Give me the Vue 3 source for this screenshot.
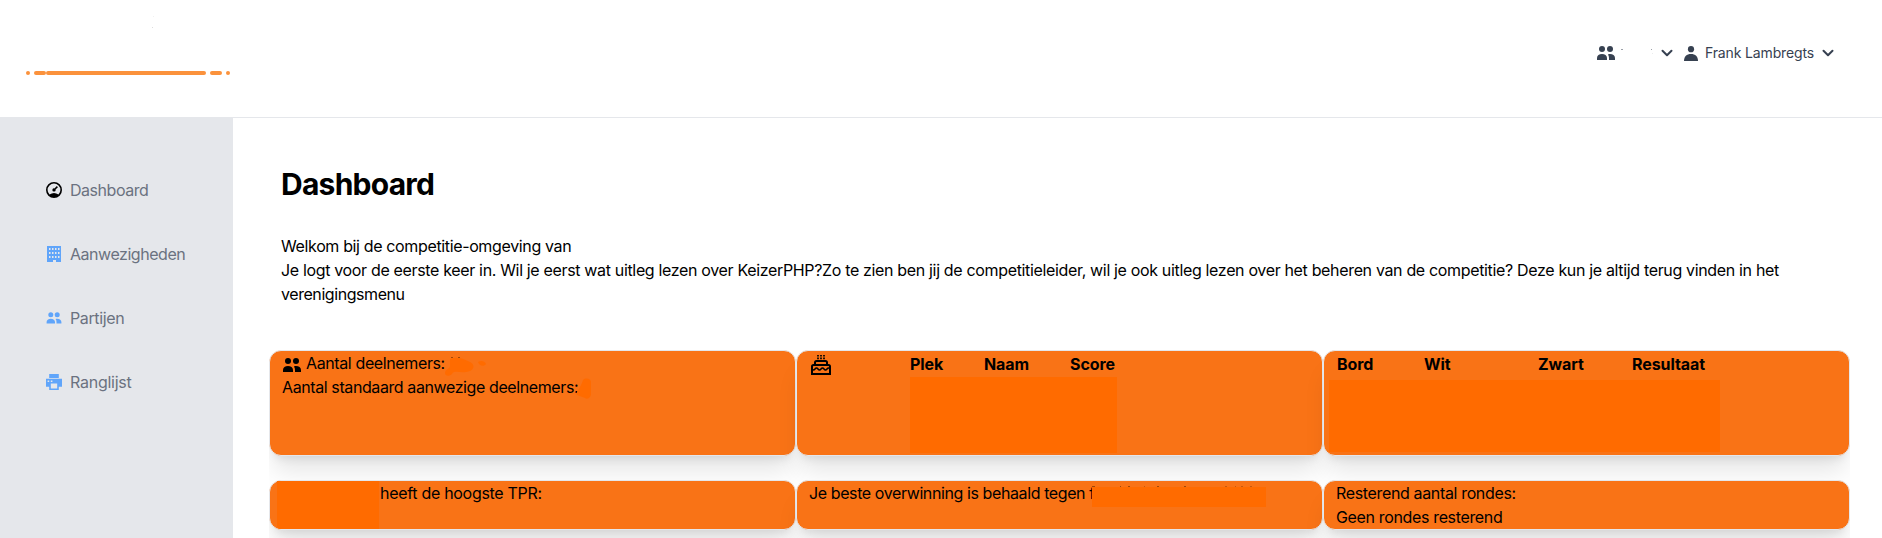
<script setup>
const standings = ['Plek', 'Naam', 'Score']
const games = ['Bord', 'Wit', 'Zwart', 'Resultaat']
</script>

<template>
  <div class="page">
    <header class="topbar">
      <svg class="logo" width="204" height="60" viewBox="0 0 204 60">
        <g fill="#ddd"><rect x="126" y="12" width="1" height="1" /><rect x="127" y="1" width="1" height="1" opacity=".4" /></g>
        <g fill="#fb923c">
          <rect y="56" width="4" height="4" rx="2" /><rect x="8" y="56" width="12" height="4" rx="2" />
          <rect x="20" y="56" width="160" height="4" rx="2" /><rect x="184" y="56" width="12" height="4" rx="2" />
          <rect x="200" y="56" width="4" height="4" rx="2" />
        </g>
      </svg>
      <nav class="account">
        <svg class="team" width="18" height="14" viewBox="0 0 18 14">
          <circle cx="5" cy="3" r="3" /><circle cx="13" cy="3" r="3" />
          <path d="M0 14v-2c0-2.400 2.200-4 5-4s5 1.600 5 4v2zM11 8.400c.6-.3 1.300-.4 2-.4 2.800 0 5 1.600 5 4v2h-6v-2c0-1.400-.3-2.600-1-3.600z" />
        </svg>
        <svg class="club" width="46" height="10" viewBox="0 0 46 10"><path d="M6 1h2v1H6zM36 1h1v1h-1z" opacity=".5" /><path d="M37 5h1v1h-1z" opacity=".1" /></svg>
        <svg class="chev" width="12" height="8" viewBox="0 0 12 8"><path d="M1.500 1.700L6 6.200l4.500-4.500" /></svg>
        <svg class="person" width="14" height="15" viewBox="0 0 14 15">
          <circle cx="7" cy="3.200" r="3.100" /><path d="M0 15c0-4.500 2.700-7 7-7s7 2.500 7 7z" />
        </svg>
        <span class="user">Frank Lambregts</span>
        <svg class="chev" width="12" height="8" viewBox="0 0 12 8"><path d="M1.500 1.700L6 6.200l4.500-4.500" /></svg>
      </nav>
    </header>
    <div class="body">
      <aside class="sidebar">
        <a class="item">
          <svg class="ico dark" viewBox="0 0 20 20"><path d="M10 20a10 10 0 1 1 0-20 10 10 0 0 1 0 20zm-5.600-4.290a9.950 9.950 0 0 1 11.200 0 8 8 0 1 0-11.200 0zm6.120-7.640l3.020-3.020 1.410 1.410-3.020 3.020a2 2 0 1 1-1.410-1.410z" /></svg>
          <span>Dashboard</span>
        </a>
        <a class="item">
          <svg class="ico" viewBox="0 0 16 16"><path fill-rule="evenodd" d="M1 0h14v16h-5v-2h-3v2H1zM3 2v2h1.500V2zM6 2v2h1.500V2zM9 2v2h1.500V2zM12 2v2h1.500V2zM3 6v2h1.500V6zM6 6v2h1.500V6zM9 6v2h1.500V6zM12 6v2h1.500V6zM3 10v2h1.500v-2zM6 10v2h1.500v-2zM9 10v2h1.500v-2zM12 10v2h1.500v-2z" /></svg>
          <span>Aanwezigheden</span>
        </a>
        <a class="item">
          <svg class="ico" viewBox="0 0 16 16">
            <circle cx="4.800" cy="4.700" r="2.500" /><circle cx="11.200" cy="4.700" r="2.500" />
            <path d="M.6 13.500V12c0-2 1.700-3.300 4.200-3.300S9 10 9 12v1.500zM9.600 9c.5-.2 1-.3 1.600-.3 2.500 0 4.200 1.300 4.200 3.300v1.500h-4.900V12c0-1.200-.3-2.200-.9-3z" />
          </svg>
          <span class="loose">Partijen</span>
        </a>
        <a class="item">
          <svg class="ico" viewBox="0 0 20 20"><path d="M4 16H0V6h20v10h-4v4H4v-4zm2-4v6h8v-6H6zM4 0h12v5H4V0zM2 8v2h2V8H2zm4 0v2h2V8H6z" /></svg>
          <span class="looser">Ranglijst</span>
        </a>
      </aside>
      <main class="main">
        <h1>Dashboard</h1>
        <div class="intro">
          <p class="i1">Welkom bij de competitie-omgeving van</p>
          <p class="i2">Je logt voor de eerste keer in. Wil je eerst wat uitleg lezen over KeizerPHP?Zo te zien ben jij de competitieleider, wil je ook uitleg lezen over het beheren van de competitie? Deze kun je altijd terug vinden in het</p>
          <p class="i3">verenigingsmenu</p>
        </div>
        <div class="cards">
          <section class="card">
            <div class="line">
              <svg class="count" width="18" height="14" viewBox="0 0 18 14">
                <circle cx="5" cy="3" r="3" /><circle cx="13" cy="3" r="3" />
                <path d="M0 14v-2c0-2.400 2.200-4 5-4s5 1.600 5 4v2zM11 8.400c.6-.3 1.300-.4 2-.4 2.800 0 5 1.600 5 4v2h-6v-2c0-1.400-.3-2.600-1-3.600z" />
              </svg>
              <span class="c1">Aantal deelnemers:</span>
              <svg class="smudge count-smudge" width="46" height="20" viewBox="0 0 46 20"><path d="M8 2c7-3 14 0 20 3 6 3 4 9-4 10-7 1-12-2-14 2-3 3-7 2-7-1 0-4 5-4 5-7zM36 5c3-2 7-1 8 2-2 3-7 2-8-2z" /><path fill="#a04808" d="M9 0h2v1H9zM16 0h2v1h-2z" /></svg>
            </div>
            <div class="line">
              <span class="c2">Aantal standaard aanwezige deelnemers:</span>
              <svg class="smudge default-smudge" width="16" height="22" viewBox="0 0 16 22"><path d="M7 2c3-3 8-1 8 2v13c-1 3-4 5-6 3l-8-3c-2-3 3-5 6-15z" /></svg>
            </div>
          </section>
          <section class="card ranking">
            <svg class="cake" width="20" height="20" viewBox="0 0 20 20">
              <path d="M7 0v5M10 0v5M13 0v5" stroke-width="1.700" stroke-dasharray="1.600 .8" />
              <path d="M4 9V7.500Q4 6 5.500 6h9Q16 6 16 7.500V9M1 19v-7.500Q1 10 2.500 10h15q1.500 0 1.500 1.500V19z" stroke-width="2" />
              <path d="M1 14q1.500 2 3 0t3 0 3 0 3 0 3 0 3 0" stroke-width="1.500" />
            </svg>
            <div class="table standings">
              <div class="head"><b v-for="h in standings" :key="h" :class="h.toLowerCase()">{{ h }}</b></div>
              <div class="mask"></div>
            </div>
          </section>
          <section class="card">
            <div class="table games">
              <div class="head"><b v-for="h in games" :key="h" :class="h.toLowerCase()">{{ h }}</b></div>
              <div class="mask"></div>
            </div>
          </section>
          <section class="card best">
            <div class="mask"></div>
            <span>heeft de hoogste TPR:</span>
          </section>
          <section class="card win">
            <span class="c4">Je beste overwinning is behaald tegen f</span>
            <div class="opponent">
              <svg width="174" height="1" viewBox="0 0 174 1"><path fill="#a04808" d="M0 0h3v1H0zM28 0h1v1h-1zM36 0h2v1h-2zM65 0h2v1h-2zM92 0h2v1h-2z" /><path fill="#c7590d" d="M52 0h1v1h-1zM133 0h2v1h-2zM143 0h1v1h-1zM149 0h2v1h-2zM158 0h2v1h-2z" /></svg>
              <div class="mask"></div>
            </div>
          </section>
          <section class="card">
            <div class="line"><span class="c5">Resterend aantal rondes:</span></div>
            <div class="line"><span class="c5">Geen rondes resterend</span></div>
          </section>
        </div>
      </main>
    </div>
  </div>
</template>

<style>
body { margin: 0; overflow: hidden; background: #fff; }
</style>
<style scoped>
* { box-sizing: border-box; }
.page { height: 538px; display: flex; flex-direction: column; overflow: hidden; font: 16px/24px Inter, sans-serif; letter-spacing: -.3px; color: #000; white-space: nowrap; }
svg { flex: none; display: block; }
.topbar { height: 118px; flex: none; display: flex; justify-content: space-between; align-items: flex-start; border-bottom: 1px solid #e5e7eb; padding: 0 48px 0 26px; }
.logo { margin-top: 15px; }
.account { display: flex; align-items: center; height: 20px; margin-top: 43px; color: #374151; fill: currentColor; font-size: 14px; line-height: 20px; }
.club { margin-bottom: 1px; }
.chev { fill: none; stroke: #374151; stroke-width: 2; stroke-linecap: round; stroke-linejoin: round; }
.person { margin-left: 11px; }
.user { margin-left: 7px; width: 109px; margin-right: 8px; letter-spacing: -.14px; }
.body { flex: 1; display: flex; min-height: 0; }
.sidebar { width: 233px; flex: none; background: #e5e7eb; padding: 60px 0 0 46px; display: flex; flex-direction: column; gap: 40px; color: #6b7280; letter-spacing: -.46px; }
.item { display: flex; align-items: center; height: 24px; gap: 8px; }
.loose { letter-spacing: -.38px; }
.looser { letter-spacing: -.26px; }
.ico { width: 16px; height: 16px; fill: #60a5fa; }
.dark { fill: #000; }
.main { flex: 1; min-width: 0; padding: 48px 32px 0 36px; }
h1 { margin: 0 0 32px 12px; font-size: 30px; line-height: 36px; font-weight: 700; letter-spacing: -.75px; }
.intro { padding-left: 12px; }
p { margin: 0; }
.i1 { letter-spacing: -.36px; }
.i2 { letter-spacing: -.34px; }
.i3 { letter-spacing: -.43px; }
.cards { display: grid; grid-template-columns: repeat(3, 527px); grid-template-rows: 106px 50px; row-gap: 24px; margin-top: 43px; padding-top: 1px; padding-bottom: 8px; overflow: hidden; }
.card { background: #f97316; border: 1px solid #e5e7eb; border-radius: 12px; padding: 0 12px; box-shadow: 0 20px 25px -5px rgba(0, 0, 0, .1), 0 8px 10px -6px rgba(0, 0, 0, .1); min-width: 0; }
.line { display: flex; height: 24px; align-items: center; }
.count { margin: 4px 5px 0 1px; }
.c1 { letter-spacing: -.38px; }
.c2 { letter-spacing: -.4px; }
.c4 { width: 283px; letter-spacing: -.4px; }
.c5 { letter-spacing: -.35px; }
.smudge { fill: #ff6b00; }
.count-smudge { margin: 8px 0 0 -3px; }
.default-smudge { margin-left: -2px; margin-top: 4px; }
.mask { background: #ff6b00; }
.ranking { display: flex; padding-left: 14px; }
.cake { margin-top: 4px; fill: none; stroke: #000; }
.head { display: flex; line-height: 24px; padding-top: 1px; height: 26px; }
.head b { font-weight: 700; letter-spacing: -.08px; }
.standings { margin-left: 79px; }
.standings .mask { width: 207px; height: 76px; }
.plek { width: 74px; }
.naam { width: 86px; }
.games .mask { width: 391px; height: 72px; margin: 3px 0 0 -7px; }
.bord { width: 87px; margin-left: 1px; }
.wit { width: 114px; }
.zwart { width: 94px; }
.best { display: flex; padding-left: 7px; }
.best .mask { width: 102px; height: 48px; margin-right: 1px; border-bottom-left-radius: 3px; }
.win { display: flex; }
.opponent { position: relative; margin-top: 5px; }
.opponent .mask { width: 174px; height: 20px; }
</style>
